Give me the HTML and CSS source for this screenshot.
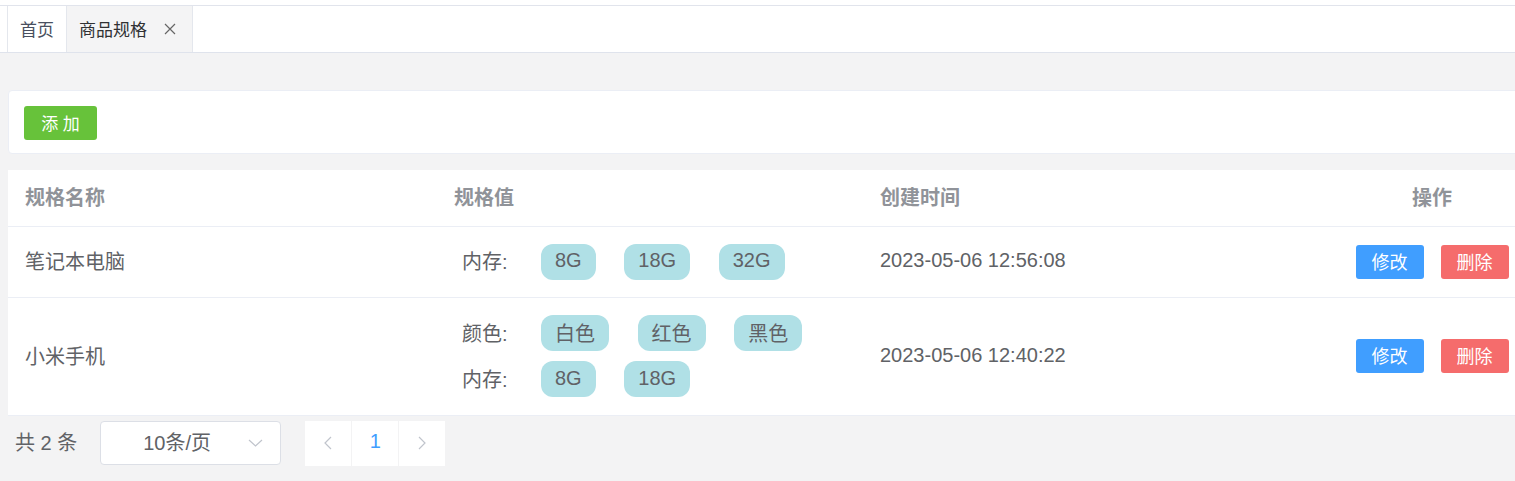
FILE: index.html
```html
<!DOCTYPE html>
<html lang="zh-CN">
<head>
<meta charset="utf-8">
<title>商品规格</title>
<link rel="stylesheet" href="styles.css">
</head>
<body>
<div class="navbar"></div>
<div class="tags-view">
  <div class="tag tag-home">首页</div>
  <div class="tag tag-active">商品规格
    <svg class="tag-close" width="12" height="12" viewBox="0 0 12 12"><path d="M1 1 L11 11 M11 1 L1 11" stroke="#666" stroke-width="1.2" fill="none"/></svg>
  </div>
</div>
<div class="main">
  <div class="card">
    <button class="btn btn-add">添 加</button>
  </div>
  <div class="table">
    <div class="row head">
      <div class="cell">规格名称</div>
      <div class="cell">规格值</div>
      <div class="cell">创建时间</div>
      <div class="cell center">操作</div>
    </div>
    <div class="row r1">
      <div class="cell">笔记本电脑</div>
      <div class="cell specs">
        <div class="spec"><span class="spec-label">内存:</span><span class="chip">8G</span><span class="chip">18G</span><span class="chip">32G</span></div>
      </div>
      <div class="cell">2023-05-06 12:56:08</div>
      <div class="cell center ops"><button class="btn btn-edit">修改</button><button class="btn btn-del">删除</button></div>
    </div>
    <div class="row r2">
      <div class="cell">小米手机</div>
      <div class="cell specs">
        <div class="spec"><span class="spec-label">颜色:</span><span class="chip">白色</span><span class="chip">红色</span><span class="chip">黑色</span></div>
        <div class="spec"><span class="spec-label">内存:</span><span class="chip">8G</span><span class="chip">18G</span></div>
      </div>
      <div class="cell">2023-05-06 12:40:22</div>
      <div class="cell center ops"><button class="btn btn-edit">修改</button><button class="btn btn-del">删除</button></div>
    </div>
  </div>
  <div class="pagination">
    <span class="total">共 2 条</span>
    <div class="select"><span class="select-text">10条/页</span>
      <svg class="chev" width="15" height="8" viewBox="0 0 15 8"><path d="M1 1 L7.5 7 L14 1" stroke="#c0c4cc" stroke-width="1.2" fill="none"/></svg>
    </div>
    <div class="pager">
      <div class="pg"><svg width="8" height="14" viewBox="0 0 8 14"><path d="M7 1 L1 7 L7 13" stroke="#c0c4cc" stroke-width="1.2" fill="none"/></svg></div>
      <div class="pg current">1</div>
      <div class="pg"><svg width="8" height="14" viewBox="0 0 8 14"><path d="M1 1 L7 7 L1 13" stroke="#c0c4cc" stroke-width="1.2" fill="none"/></svg></div>
    </div>
  </div>
</div>
</body>
</html>
```
FILE: styles.css
```css
* { box-sizing: border-box; }
html, body { margin: 0; padding: 0; }
body {
  font-family: "Liberation Sans", "Noto Sans CJK SC", sans-serif;
  background: #f3f3f4;
  overflow: hidden;
  width: 1515px;
  height: 481px;
}
.navbar {
  height: 6px;
  background: #fff;
  border-bottom: 1px solid #e1e4ec;
}
.tags-view {
  height: 47px;
  background: #fff;
  border-bottom: 1px solid #dfe3ec;
  display: flex;
  padding-left: 7px;
}
.tag {
  display: flex;
  align-items: center;
  height: 46px;
  font-size: 17px;
  color: #495060;
  border-right: 1px solid #e4e7ed;
  padding-bottom: 1px;
}
.tag-home {
  border-left: 1px solid #e4e7ed;
  padding-left: 12px;
  padding-right: 12px;
  background: #fff;
}
.tag-active {
  background: #f4f4f5;
  color: #303133;
  padding-left: 12px;
  padding-right: 16px;
}
.tag-close { margin-left: 17px; }
.main {
  padding: 37px 0 0 8px;
}
.card {
  width: 1515px;
  height: 64px;
  background: #fff;
  border: 1px solid #ebeef5;
  border-radius: 4px;
  padding: 15px;
}
.btn {
  border: none;
  color: #fff;
  font-family: inherit;
  border-radius: 3px;
  padding: 0 0 2px 0;
  display: inline-flex;
  align-items: center;
  justify-content: center;
}
.btn-add {
  background: #67c23a;
  width: 73px;
  height: 34px;
  font-size: 17px;
}
.table {
  margin-top: 16px;
  width: 1515px;
  background: #fff;
}
.row {
  display: grid;
  grid-template-columns: 429px 426px 482px 178px;
  border-bottom: 1px solid #ebeef5;
  font-size: 20px;
  color: #606266;
}
.row.head { height: 57px; font-weight: bold; color: #909399; }
.row.r1 { height: 71px; }
.row.r2 { height: 118px; }
.cell {
  display: flex;
  align-items: center;
  padding-left: 17px;
  padding-bottom: 3px;
}
.cell.center { justify-content: center; padding-left: 0; padding-right: 4px; }
.specs {
  flex-direction: column;
  align-items: flex-start;
  justify-content: center;
  gap: 10px;
  padding-left: 25px;
  padding-bottom: 1px;
}
.spec { display: flex; align-items: center; }
.spec-label { width: 79px; padding-bottom: 2px; }
.chip {
  height: 36px;
  padding: 0 14px 2px;
  border-radius: 12px;
  background: #b0e0e6;
  color: #606266;
  display: inline-flex;
  align-items: center;
  margin-right: 28.6px;
}
.ops { gap: 17px; padding-bottom: 1px; }
.btn-edit, .btn-del {
  width: 68px;
  height: 34px;
  font-size: 18px;
}
.btn-edit { background: #409eff; }
.btn-del { background: #f56c6c; }
.pagination {
  display: flex;
  align-items: center;
  margin-top: 4px;
  height: 46px;
  font-size: 20px;
  color: #606266;
}
.total { margin-left: 7px; padding-bottom: 4px; }
.select {
  margin-left: 23px;
  width: 181px;
  height: 44px;
  border: 1px solid #dcdfe6;
  border-radius: 4px;
  background: #fff;
  display: flex;
  align-items: center;
  padding-left: 42px;
}
.select-text { padding-bottom: 3px; }
.chev { margin-left: auto; margin-right: 17px; }
.pager {
  margin-left: 24px;
  display: flex;
  gap: 1px;
  height: 45px;
}
.pg {
  width: 46px;
  height: 45px;
  background: #fff;
  display: flex;
  align-items: center;
  justify-content: center;
}
.pg.current { color: #409eff; padding-bottom: 3px; }
```
